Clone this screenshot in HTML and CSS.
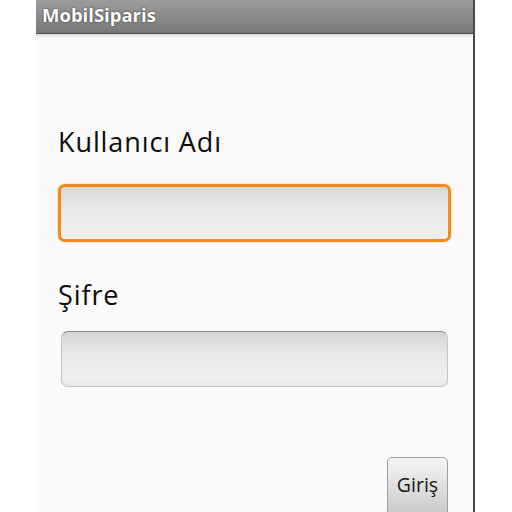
FILE: index.html
```html
<!DOCTYPE html>
<html lang="tr">
<head>
    <meta charset="UTF-8">
    <meta name="viewport" content="width=device-width, initial-scale=1.0">
    <title>MobilSiparis</title>
    <link rel="stylesheet" href="styles.css">
</head>
<body>
    <div class="screen">
        <div class="title-bar">MobilSiparis</div>
        <div class="content">
            <label class="field-label" for="username">Kullanıcı Adı</label>
            <input class="text-field focused" id="username" type="text">
            <label class="field-label second" for="password">Şifre</label>
            <input class="text-field" id="password" type="password">
            <div class="actions">
                <button class="login-button">Giriş</button>
            </div>
        </div>
    </div>
</body>
</html>
```

FILE: styles.css
```css
body {
    margin: 0;
    padding: 0;
    background-color: #ffffff;
    font-family: "Open Sans", "DejaVu Sans", sans-serif;
    overflow: hidden;
}
.screen {
    margin-left: 36px;
    width: 437px;
    height: 512px;
    background-color: #fafafa;
    border-right: 2px solid #484848;
    display: flex;
    flex-direction: column;
    overflow: hidden;
}
.title-bar {
    flex-shrink: 0;
    height: 33px;
    line-height: 29px;
    padding-left: 6px;
    background: linear-gradient(#9c9c9c, #787878);
    border-bottom: 1px solid #4c4c4c;
    box-shadow: 0 2px 3px rgba(0, 0, 0, 0.12);
    color: #ffffff;
    font-size: 18.5px;
    font-weight: bold;
    text-shadow: 0 0 2px rgba(0, 0, 0, 0.7);
}
.content {
    flex-shrink: 0;
    display: flex;
    flex-direction: column;
    padding: 91px 22px 0 22px;
}
.field-label {
    font-size: 27px;
    line-height: 34px;
    color: #0c0c0c;
    letter-spacing: 0.9px;
}
.field-label.second {
    margin-top: 36px;
}
.text-field {
    box-sizing: border-box;
    height: 58px;
    margin: 25px 0 0 0;
    border-radius: 7px;
    border: 1px solid #c4c4c4;
    border-top-color: #8a8a8a;
    background: linear-gradient(#d4d4d4, #e6e6e6 35%, #efefef 85%, #e8e8e8);
    font-size: 20px;
    outline: none;
}
.text-field.focused {
    border: 3px solid #f08a1c;
    box-shadow: 0 0 2px rgba(240, 138, 28, 0.6);
    background: linear-gradient(#d8d8d8, #e8e8e8 40%, #f0f0f0);
}
.field-label.second + .text-field {
    height: 56px;
    margin: 19px 3px 0 3px;
}
.actions {
    display: flex;
    justify-content: flex-end;
    margin-top: 70px;
    padding-right: 3px;
}
.login-button {
    width: 61px;
    height: 62px;
    padding: 0 0 8px 0;
    border: 1px solid #9e9e9e;
    border-radius: 5px;
    background: linear-gradient(#f4f4f4, #dedede 50%, #c6c6c6);
    font-family: "Open Sans", sans-serif;
    font-size: 19.5px;
    color: #161616;
}
```
